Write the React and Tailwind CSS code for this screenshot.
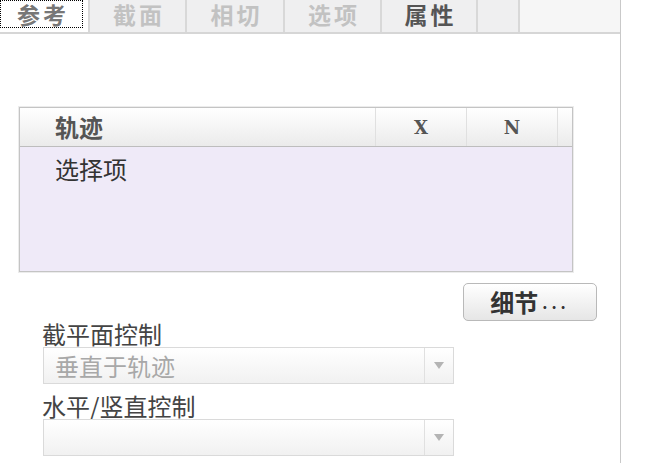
import React from "react";

const cjk = { fontFamily: '"Noto Sans CJK SC", "Noto Sans", sans-serif' };

const tabs = [
  { label: "参考", w: "w-[90px]", active: true },
  { label: "截面", w: "w-[97px]", color: "text-[#c2c2c2]" },
  { label: "相切", w: "w-[98px]", color: "text-[#c2c2c2]" },
  { label: "选项", w: "w-[97px]", color: "text-[#c2c2c2]" },
  { label: "属性", w: "w-[96px]", color: "text-[#555]" },
  { label: "", w: "w-[42px]" },
];

function Select({ value }) {
  return (
    <div className="ml-[43px] flex h-[37px] w-[411px] border border-[#dadada] bg-gradient-to-b from-white to-[#f1f1f1]">
      <div className="flex flex-1 items-center pl-[11px] text-[24px] leading-none text-[#a8a8a8]">
        {value}
      </div>
      <div className="flex w-[29px] items-center justify-center border-l border-[#e0e0e0]">
        <svg width="10" height="7" viewBox="0 0 10 7">
          <path d="M0 0 L10 0 L5 7 Z" fill="#b4b4b4" />
        </svg>
      </div>
    </div>
  );
}

export default function App() {
  return (
    <div className="h-[463px] w-[648px] overflow-hidden bg-white" style={cjk}>
      <div className="flex h-full w-[621px] flex-col border-r border-[#c9c9c9]">
        {/* tab bar */}
        <div className="flex h-[34px] shrink-0 border-b-2 border-[#d6d6d6] bg-[#f6f6f6]">
          {tabs.map((t, i) =>
            t.active ? (
              <div key={i} className={`${t.w} h-full border-r-2 border-[#d8d8d8] bg-white pr-[5px]`}>
                <div className="flex h-[28px] items-center justify-center border border-dotted border-black pl-[3px] text-[23px] font-bold leading-none tracking-[3px] text-[#777]">
                  {t.label}
                </div>
              </div>
            ) : (
              <div
                key={i}
                className={`${t.w} flex h-full items-center justify-center border-r-2 border-[#d8d8d8] bg-[#efeff0] pb-[3px] pl-[3px] text-[23px] font-bold leading-none tracking-[3px] ${t.color || ""}`}
              >
                {t.label}
              </div>
            )
          )}
        </div>

        {/* track table */}
        <div className="ml-[19px] mt-[73px] flex h-[165px] w-[554px] flex-col border border-[#c4c4c4] shadow-[0_0_0_1px_#ececec]">
          <div className="flex h-[39px] shrink-0 border-b border-[#bdbdbd] bg-gradient-to-b from-white to-[#ebebeb]">
            <div className="flex w-[356px] items-center border-r border-[#e0e0e0] pl-[35px] text-[24px] font-bold leading-none text-[#555]">
              轨迹
            </div>
            <div
              className="flex w-[91px] items-center justify-center border-r border-[#e0e0e0] text-[18px] font-bold text-[#555]"
              style={{ fontFamily: '"DejaVu Serif", serif' }}
            >
              X
            </div>
            <div
              className="flex w-[91px] items-center justify-center border-r border-[#e0e0e0] text-[18px] font-bold text-[#555]"
              style={{ fontFamily: '"DejaVu Serif", serif' }}
            >
              N
            </div>
            <div className="flex-1" />
          </div>
          <div className="flex-1 bg-[#efeaf8] pl-[35px] pt-[8px] text-[24px] leading-[28px] text-[#333]">
            选择项
          </div>
        </div>

        {/* details button */}
        <div className="mr-[23px] mt-[11px] flex justify-end">
          <button className="flex h-[38px] w-[134px] items-center justify-center rounded-[5px] border border-[#b9b9b9] bg-gradient-to-b from-white to-[#e6e6e6] text-[24px] font-bold leading-none text-[#333]">
            细节<span className="ml-[4px] text-[16px] tracking-[4px]">...</span>
          </button>
        </div>

        {/* section plane controls */}
        <div className="ml-[42px] text-[24px] leading-[26px] text-[#444]">截平面控制</div>
        <Select value="垂直于轨迹" />
        <div className="ml-[42px] mt-[9px] text-[24px] leading-[26px] text-[#444]">水平/竖直控制</div>
        <Select value="" />
      </div>
    </div>
  );
}
